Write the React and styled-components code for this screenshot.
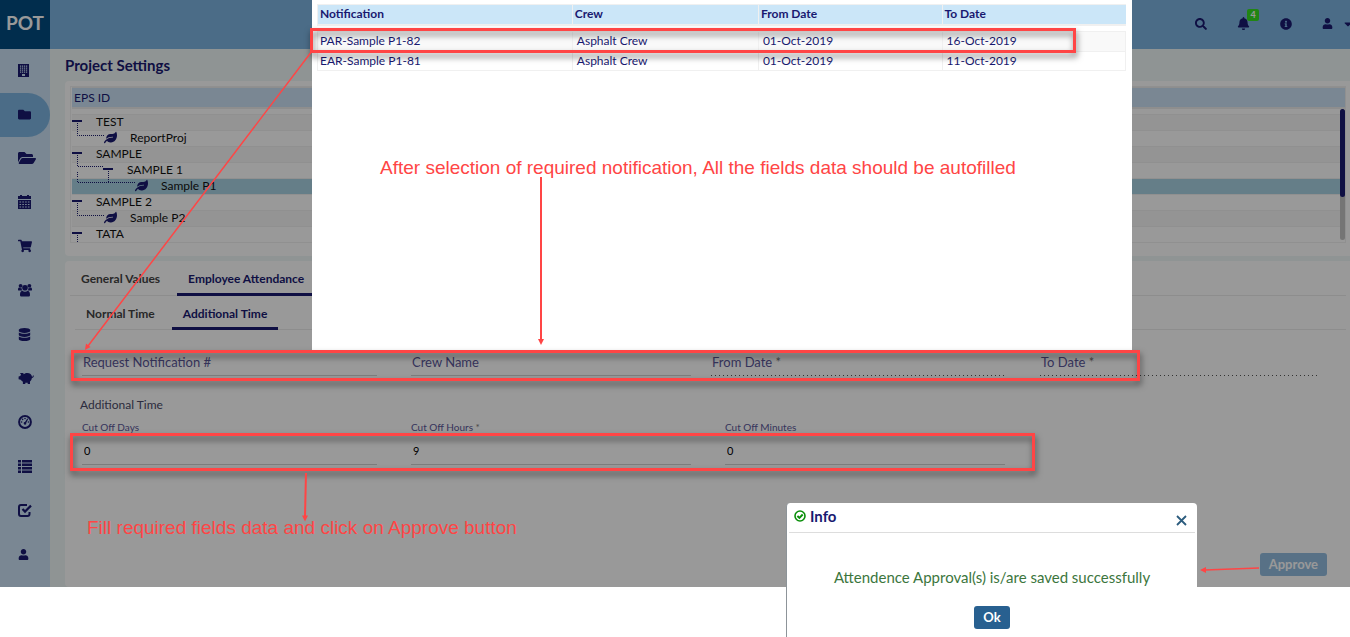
import React from "react";
import styled, { createGlobalStyle, css } from "styled-components";
import {
  FaFolder, FaFolderOpen, FaShoppingCart, FaDatabase,
  FaUser, FaSearch, FaBell, FaInfoCircle, FaCaretDown, FaLeaf,
} from "react-icons/fa";

const navy = "#191970";
const red = "#ff4545";

const GlobalStyle = createGlobalStyle`
  *, *::before, *::after { box-sizing: border-box; }
  body {
    margin: 0;
    background: #fff;
    font-family: Lato, "Liberation Sans", sans-serif;
    font-size: 12px;
    color: ${navy};
    overflow: hidden;
  }
  button, input { font: inherit; }
`;

const Screen = styled.div`
  position: relative;
  min-height: 100vh;
`;

const Shell = styled.div`
  position: relative;
  display: flex;
  background: #eff7f7;
`;

const Shade = styled.div`
  position: absolute;
  inset: 0;
  background: rgba(0, 0, 0, 0.4);
`;

const Sidebar = styled.aside`
  flex: none;
  width: 50px;
  background: #cbe1f5;
  padding-bottom: 10px;
`;

const Brand = styled.div`
  height: 49px;
  display: flex;
  align-items: center;
  justify-content: center;
  padding-bottom: 4px;
  background: #024b80;
  color: #fff;
  font-size: 19px;
  font-weight: 700;
`;

const Nav = styled.nav`
  display: flex;
  flex-direction: column;
`;

const NavLink = styled.a`
  height: 44px;
  display: flex;
  align-items: center;
  padding: 0 0 2px 18px;
  color: ${navy};
  border-radius: 0 22px 22px 0;
  background: ${(p) => (p.$active ? "#7db5e1" : "transparent")};
`;

const Column = styled.div`
  flex: 1;
  min-width: 0;
  display: flex;
  flex-direction: column;
`;

const TopBar = styled.header`
  height: 49px;
  display: flex;
  align-items: center;
  justify-content: flex-end;
  gap: 30px;
  padding-bottom: 2px;
  overflow: hidden;
  background: #7db5e1;
`;

const IconButton = styled.button`
  position: relative;
  display: flex;
  align-items: center;
  gap: 9px;
  padding: 0;
  border: 0;
  background: none;
  color: ${navy};
  white-space: nowrap;

  &:last-child { margin-right: -4px; }
`;

const Badge = styled.span`
  position: absolute;
  left: 10px;
  bottom: 9px;
  width: 12px;
  height: 12px;
  border-radius: 2px;
  background: #37de21;
  color: #fff;
  font-size: 9px;
  font-weight: 700;
  line-height: 11px;
  text-align: center;
`;

const Main = styled.main`
  flex: 1;
  display: flex;
  flex-direction: column;
  gap: 5px;
  padding-left: 15px;
`;

const PageTitle = styled.h1`
  margin: 0 0 -5px;
  height: 32px;
  font-size: 15px;
  line-height: 32px;
  font-weight: 700;
`;

const Card = styled.section`
  background: #fff;
  border-radius: 4px 0 0 4px;
`;

const TreeCard = styled(Card)`
  padding: 5px 4px 13px 5px;
`;

const TreeFrame = styled.div`
  position: relative;
  border: 1px solid #f0f0f0;
  padding-left: 1px;
`;

const TreeTable = styled.table`
  width: 100%;
  border-collapse: separate;
  border-spacing: 0;
  color: #111;

  th {
    height: 22px;
    padding: 0 2px;
    border: solid #ededed;
    border-width: 1px 0 2px;
    background: #cbe1f5;
    color: ${navy};
    font-size: 12px;
    line-height: 16px;
    font-weight: 400;
    text-align: left;
  }
  tbody::before {
    content: "";
    display: block;
    height: 5px;
  }
`;

const TreeRow = styled.tr`
  background: ${(p) => (p.$selected ? "#a9d3e3" : p.$alt ? "#f7f7f7" : "#fff")};
  td {
    height: 16px;
    padding: 0;
    border-top: 1px solid #f0f0f0;
  }
`;

const TreeLabel = styled.div`
  display: flex;
  height: 15px;
  font-size: 12px;
  line-height: 14px;
`;

const ScrollTrack = styled.div`
  position: absolute;
  right: 0;
  top: 22px;
  bottom: 2px;
  width: 5px;
  border-radius: 3px;
  background: #c4c4c4;
`;

const ScrollThumb = styled.div`
  height: 88px;
  border-radius: 3px;
  background: ${navy};
`;

const FormCard = styled(Card)`
  flex: 1;
  display: flex;
  flex-direction: column;
  padding: 0 4px 0 5px;
`;

const Tabs = styled.div`
  display: flex;
  margin-left: ${(p) => p.$indent || 0}px;
  height: ${(p) => p.$height}px;
  box-shadow: inset 0 -2px 0 -1px #ebebeb;
`;

const Tab = styled.button`
  padding: 3px 11px 0;
  margin-right: 6px;
  border: 0;
  border-bottom: 3px solid transparent;
  background: none;
  font-size: 12px;
  font-weight: 700;
  color: #444;
  ${(p) => p.$active && css`
    border-color: ${navy};
    color: ${navy};
  `}
`;

const FieldRow = styled.div`
  display: grid;
  grid-template-columns: ${(p) => p.$columns};
  padding: 0 28px 0 12px;
  margin-top: ${(p) => p.$top}px;
`;

const dots = css`
  border: 0;
  background: repeating-linear-gradient(90deg, #555 0 1px, transparent 1px 4px)
    bottom / 100% 1px no-repeat;
`;

const Floating = styled.div`
  display: grid;
  margin-right: ${(p) => p.$gap}px;
  label, input { grid-area: 1 / 1; }
  label {
    padding-left: 1px;
    font-size: 13px;
    line-height: 24px;
    color: #5b5799;
  }
  input {
    width: 100%;
    height: 26px;
    padding: 0;
    border: 0;
    border-bottom: 1px solid #d0d0d0;
    background: none;
    ${(p) => p.$dotted && dots}
  }
`;

const Stacked = styled.div`
  display: flex;
  flex-direction: column;
  margin-right: ${(p) => p.$gap}px;
  label {
    font-size: 10px;
    line-height: 14px;
    color: #5b5799;
  }
  input {
    width: 100%;
    height: 31px;
    padding: 2px 2px 0;
    border: 0;
    border-bottom: 1px solid #d0d0d0;
    background: none;
    color: #000;
    font-size: 11px;
  }
`;

const Required = styled.span`
  color: #777;
`;

const GroupTitle = styled.h2`
  margin: 21px 0 0 10px;
  font-size: 12px;
  line-height: 16px;
  font-weight: 400;
  color: #4a4a68;
`;

const Actions = styled.div`
  flex: 1;
  display: flex;
  align-items: flex-end;
  justify-content: flex-end;
  padding: 0 19px 11px 0;
`;

const Button = styled.button`
  height: 23px;
  padding: 0 9px 1px;
  border: 0;
  border-radius: 3px;
  background: ${(p) => (p.$muted ? "#93bde0" : "#286090")};
  color: #fff;
  font-size: 13px;
  font-weight: 700;
`;

const Picker = styled.div`
  position: absolute;
  left: 312px;
  top: 0;
  width: 820px;
  height: 350px;
  padding: 4px 6px 0 5px;
  background: #fff;
`;

const PickerTable = styled.table`
  width: 100%;
  table-layout: fixed;
  border-collapse: separate;
  border-spacing: 0;
  font-size: 12px;
  line-height: 16px;

  th {
    height: 22px;
    padding: 0 2px 1px;
    border: solid #f0f0f0;
    border-width: 1px 0 2px 1px;
    background: #cbe6f8;
    font-weight: 700;
    text-align: left;
  }
  tbody::before {
    content: "";
    display: block;
    height: 5px;
  }
  td {
    height: 20px;
    padding: 0 0 1px 2px;
    border: solid #f0f0f0;
    border-width: 1px 0 0 1px;
  }
  td + td { padding-left: 4px; }
  td:last-child { border-right-width: 1px; }
  tbody tr:first-child { background: #f9f9f9; }
  tbody tr:last-child td { border-bottom-width: 1px; }
`;

const InfoDialog = styled.div`
  position: absolute;
  left: 786px;
  top: 503px;
  bottom: 0;
  width: 411px;
  padding: 0 2px;
  border-left: 1px solid #8d9499;
  border-radius: 4px 4px 0 0;
  background: #fff;
  display: flex;
  flex-direction: column;
  align-items: center;
`;

const InfoHeader = styled.div`
  align-self: stretch;
  display: flex;
  align-items: center;
  gap: 4px;
  height: 30px;
  padding: 0 8px 4px 5px;
  border-bottom: 1px solid #ddd;
`;

const InfoTitle = styled.h2`
  flex: 1;
  margin: 0;
  font-size: 15px;
  line-height: 18px;
  font-weight: 700;
`;

const CloseButton = styled.button`
  display: flex;
  padding: 9px 0 0;
  border: 0;
  background: none;
  color: #2c5c7e;
`;

const InfoText = styled.p`
  margin: 35px 0 20px;
  font-size: 15px;
  line-height: 18px;
  color: #3c763d;
`;

const Marker = styled.div`
  position: absolute;
  left: ${(p) => p.$x}px;
  top: ${(p) => p.$y}px;
  width: ${(p) => p.$w}px;
  height: ${(p) => p.$h}px;
  border: 3px solid ${red};
  filter: drop-shadow(1px 4px 3px rgba(0, 0, 0, 0.55));
  pointer-events: none;
`;

const Note = styled.p`
  position: absolute;
  left: ${(p) => p.$x}px;
  top: ${(p) => p.$y}px;
  margin: 0;
  color: ${red};
  font-family: "Liberation Sans", Arial, sans-serif;
  font-size: 19px;
  line-height: 22px;
  white-space: nowrap;
`;

const Arrows = styled.svg`
  position: absolute;
  left: 0;
  top: 0;
  pointer-events: none;
`;

const Glyph = ({ w = 14, h = 14, children }) => (
  <svg width={w} height={h} viewBox={`0 0 ${w} ${h}`} fill="currentColor" aria-hidden="true">
    {children}
  </svg>
);

const BuildingIcon = () => (
  <Glyph w={11} h={13}>
    <path fillRule="evenodd" d="M0 0h11v13H0zM2 1.5v1.2h1.2V1.5zm2 0v1.2h1.2V1.5zm2 0v1.2h1.2V1.5zm2 0v1.2h1.2V1.5zM2 3.5v1.2h1.2V3.5zm2 0v1.2h1.2V3.5zm2 0v1.2h1.2V3.5zm2 0v1.2h1.2V3.5zM2 5.5v1.2h1.2V5.5zm2 0v1.2h1.2V5.5zm2 0v1.2h1.2V5.5zm2 0v1.2h1.2V5.5zM2 7.5v1.2h1.2V7.5zm2 0v1.2h1.2V7.5zm2 0v1.2h1.2V7.5zm2 0v1.2h1.2V7.5zM4 10v2h3v-2z" />
  </Glyph>
);
const CalendarIcon = () => (
  <Glyph w={13} h={14}>
    <path d="M0 1h2V0h2v1h5V0h2v1h2v3H0z" />
    <path fillRule="evenodd" d="M0 5h13v9H0zM1.5 6.6v1h1.6v-1zm2.8 0v1h1.6v-1zm2.8 0v1h1.6v-1zm2.8 0v1h1.6v-1zM1.5 9v1h1.6V9zm2.8 0v1h1.6V9zm2.8 0v1h1.6V9zm2.8 0v1h1.6V9zM1.5 11.4v1h1.6v-1zm2.8 0v1h1.6v-1zm2.8 0v1h1.6v-1zm2.8 0v1h1.6v-1z" />
  </Glyph>
);
const GroupIcon = () => (
  <Glyph w={14} h={14}>
    <circle cx="2.6" cy="2.8" r="1.9" />
    <circle cx="11.4" cy="2.8" r="1.9" />
    <circle cx="7" cy="4.8" r="2.8" />
    <path d="M0 7V6.200c0-1 .6-1.600 1.500-1.600.7.600 1.400.700 2 .500 0 1 .3 1.800.8 2.400H1C.4 7.500 0 7.400 0 7zM14 7v-.8c0-1-.6-1.600-1.500-1.600-.7.600-1.400.700-2 .500 0 1-.3 1.800-.8 2.400H13c.6 0 1-.1 1-.500zM2 12c0-2.500.7-4 2.300-4.300C5.900 9 8.100 9 9.700 7.700 11.300 8 12 9.500 12 12c0 1-.7 1.600-1.600 1.600H3.600C2.700 13.600 2 13 2 12z" />
  </Glyph>
);
const PigIcon = () => (
  <Glyph w={16} h={13}>
    <path d="M2 1h3.200l.6 1.200C6.800 1.300 8 1 9.300 1c2.600 0 4.400 1.600 4.700 3.800.6 0 .9-.4.900-1.300h.9c.1 1.600-.7 2.400-1.900 2.500-.2 1.600-.9 2.700-1.900 3.500V12H9.700v-1.300H7.300V12H4.900V9.700C3.900 9.200 3.200 8.500 2.700 7.700L.6 7.200V4.600l1.700-.500c.2-.5.400-.9.800-1.300z" />
  </Glyph>
);
const GaugeIcon = () => (
  <Glyph w={14} h={14}>
    <circle cx="7" cy="7" r="5.900" fill="none" stroke="currentColor" strokeWidth="2" />
    <circle cx="3.600" cy="7" r=".8" />
    <circle cx="4.600" cy="4.400" r=".8" />
    <circle cx="7" cy="3.500" r=".8" />
    <circle cx="10.400" cy="7" r=".8" />
    <path d="M9.300 3.600l.9.500-2 3.800a1.300 1.300 0 1 1-1.200-.8z" />
  </Glyph>
);
const ListIcon = () => (
  <Glyph w={14} h={13}>
    <path d="M0 0h3v2.500H0zm4 0h10v2.500H4zM0 3.500h3V6H0zm4 0h10V6H4zM0 7h3v2.500H0zm4 0h10v2.500H4zM0 10.500h3V13H0zm4 0h10V13H4z" />
  </Glyph>
);
const CheckBoxIcon = () => (
  <Glyph w={14} h={13}>
    <path d="M9 1H3a2 2 0 0 0-2 2v7a2 2 0 0 0 2 2h6.500a2 2 0 0 0 2-2V8" fill="none" stroke="currentColor" strokeWidth="2" />
    <path d="M4.500 5l2.500 2.600L13 1.600" fill="none" stroke="currentColor" strokeWidth="2.200" />
  </Glyph>
);
const CheckCircleIcon = () => (
  <Glyph w={12} h={12}>
    <g fill="none" stroke="#0a8f0a">
      <circle cx="6" cy="6" r="5" strokeWidth="1.600" />
      <path d="M3.400 6l2 2 3.300-3.500" strokeWidth="1.900" />
    </g>
  </Glyph>
);
const CloseIcon = () => (
  <Glyph w={11} h={11}>
    <path d="M1 1l9 9M10 1l-9 9" fill="none" stroke="currentColor" strokeWidth="1.800" />
  </Glyph>
);

const navItems = [
  ["Company", <BuildingIcon />],
  ["Projects", <FaFolder size={13} />],
  ["Documents", <FaFolderOpen size={18} />],
  ["Calendar", <CalendarIcon />],
  ["Procurement", <FaShoppingCart size={14} />],
  ["Teams", <GroupIcon />],
  ["Data", <FaDatabase size={13} />],
  ["Finance", <PigIcon />],
  ["Dashboard", <GaugeIcon />],
  ["Lists", <ListIcon />],
  ["Approvals", <CheckBoxIcon />],
  ["Profile", <FaUser size={11} />],
];

/* Branch drawings: dots run between nodes, a bar marks an open folder, a leaf marks a project. */
const treeRows = [
  { name: "TEST", width: 24, bar: 0, dots: "M5.500 8V15" },
  { name: "ReportProj", width: 58, leaf: 32, dots: "M5.500 0V4.500H32" },
  { name: "SAMPLE", width: 24, bar: 0, dots: "M5.500 8V15" },
  { name: "SAMPLE 1", width: 55, bar: 31, dots: "M5.500 0V3.500H31M5.500 9V15M36.500 8V15" },
  { name: "Sample P1", width: 89, leaf: 63, dots: "M5.500 0V3.500H63M36.500 0V3", selected: true },
  { name: "SAMPLE 2", width: 24, bar: 0, dots: "M5.500 8V15" },
  { name: "Sample P2", width: 58, leaf: 32, dots: "M5.500 0V4.500H32" },
  { name: "TATA", width: 24, bar: 0, dots: "M5.500 8V15" },
];

const notifications = [
  ["PAR-Sample P1-82", "Asphalt Crew", "01-Oct-2019", "16-Oct-2019"],
  ["EAR-Sample P1-81", "Asphalt Crew", "01-Oct-2019", "11-Oct-2019"],
];

function TreeBranch({ row }) {
  return (
    <svg width={row.width} height="15" aria-hidden="true">
      <path d={row.dots} fill="none" stroke={navy} strokeDasharray="1 1" />
      {row.bar !== undefined && <rect x={row.bar} y="5" width="10" height="2" fill={navy} />}
      {row.leaf !== undefined && <FaLeaf x={row.leaf} y="0" size={13} color={navy} />}
    </svg>
  );
}

export default function App() {
  return (
    <Screen>
      <GlobalStyle />
      <Shell>
        <Sidebar>
          <Brand>POT</Brand>
          <Nav>
            {navItems.map(([name, icon]) => (
              <NavLink key={name} href="#" aria-label={name} $active={name === "Projects"}>
                {icon}
              </NavLink>
            ))}
          </Nav>
        </Sidebar>
        <Column>
          <TopBar>
            <IconButton aria-label="Search"><FaSearch size={12} /></IconButton>
            <IconButton aria-label="Alerts"><FaBell size={13} /><Badge>4</Badge></IconButton>
            <IconButton aria-label="Information"><FaInfoCircle size={12} /></IconButton>
            <IconButton aria-label="Account"><FaUser size={11} /><FaCaretDown size={12} /></IconButton>
          </TopBar>
          <Main>
            <PageTitle>Project Settings</PageTitle>
            <TreeCard>
              <TreeFrame>
                <TreeTable>
                  <thead><tr><th>EPS ID</th></tr></thead>
                  <tbody>
                    {treeRows.map((row, i) => (
                      <TreeRow key={row.name} $alt={i % 2 === 0} $selected={row.selected}>
                        <td><TreeLabel><TreeBranch row={row} />{row.name}</TreeLabel></td>
                      </TreeRow>
                    ))}
                  </tbody>
                </TreeTable>
                <ScrollTrack><ScrollThumb /></ScrollTrack>
              </TreeFrame>
            </TreeCard>
            <FormCard>
              <Tabs $height={35}>
                <Tab>General Values</Tab>
                <Tab $active>Employee Attendance</Tab>
              </Tabs>
              <Tabs $height={34} $indent={5}>
                <Tab>Normal Time</Tab>
                <Tab $active>Additional Time</Tab>
              </Tabs>
              <FieldRow $columns="329fr 300fr 329fr 278fr" $top={20}>
                <Floating $gap={34}>
                  <label htmlFor="request">Request Notification #</label>
                  <input id="request" />
                </Floating>
                <Floating $gap={20}>
                  <label htmlFor="crew">Crew Name</label>
                  <input id="crew" />
                </Floating>
                <Floating $gap={36} $dotted>
                  <label htmlFor="from">From Date <Required>*</Required></label>
                  <input id="from" />
                </Floating>
                <Floating $gap={0} $dotted>
                  <label htmlFor="to">To Date <Required>*</Required></label>
                  <input id="to" />
                </Floating>
              </FieldRow>
              <GroupTitle>Additional Time</GroupTitle>
              <FieldRow $columns="329fr 314fr 280fr 313fr" $top={7}>
                <Stacked $gap={34}>
                  <label htmlFor="days">Cut Off Days</label>
                  <input id="days" defaultValue="0" />
                </Stacked>
                <Stacked $gap={34}>
                  <label htmlFor="hours">Cut Off Hours <Required>*</Required></label>
                  <input id="hours" defaultValue="9" />
                </Stacked>
                <Stacked $gap={0}>
                  <label htmlFor="minutes">Cut Off Minutes</label>
                  <input id="minutes" defaultValue="0" />
                </Stacked>
              </FieldRow>
              <Actions><Button $muted>Approve</Button></Actions>
            </FormCard>
          </Main>
        </Column>
        <Shade />
      </Shell>

      <Picker role="dialog" aria-label="Notifications">
        <PickerTable>
          <colgroup>
            <col style={{ width: "31.5%" }} />
            <col style={{ width: "23%" }} />
            <col style={{ width: "22.7%" }} />
            <col />
          </colgroup>
          <thead>
            <tr><th>Notification</th><th>Crew</th><th>From Date</th><th>To Date</th></tr>
          </thead>
          <tbody>
            {notifications.map((cells) => (
              <tr key={cells[0]}>{cells.map((c, i) => <td key={i}>{c}</td>)}</tr>
            ))}
          </tbody>
        </PickerTable>
      </Picker>

      <InfoDialog role="dialog" aria-label="Info">
        <InfoHeader>
          <CheckCircleIcon />
          <InfoTitle>Info</InfoTitle>
          <CloseButton aria-label="Close"><CloseIcon /></CloseButton>
        </InfoHeader>
        <InfoText>Attendence Approval(s) is/are saved successfully</InfoText>
        <Button>Ok</Button>
      </InfoDialog>

      <Marker $x={310} $y={28} $w={766} $h={25} />
      <Marker $x={71} $y={350} $w={1069} $h={31} />
      <Marker $x={70} $y={433} $w={965} $h={38} />
      <Note $x={380} $y={157}>After selection of required notification, All the fields data should be autofilled</Note>
      <Note $x={87} $y={517}>Fill required fields data and click on Approve button</Note>
      <Arrows width="1350" height="637" aria-hidden="true">
        <g fill={red} stroke={red}>
          <path d="M312 51L88 346" strokeWidth="1.500" />
          <path d="M85 350l1-6.500 4.500 3.500z" stroke="none" />
          <path d="M541 177V340" strokeWidth="2" />
          <path d="M538 339h6l-3 6z" stroke="none" />
          <path d="M306 473L305 516" strokeWidth="2" />
          <path d="M302 515.500h6l-3 6z" stroke="none" />
          <path d="M1259 568L1205 570" strokeWidth="1.500" />
          <path d="M1200 570l6-3v6z" stroke="none" />
        </g>
      </Arrows>
    </Screen>
  );
}
